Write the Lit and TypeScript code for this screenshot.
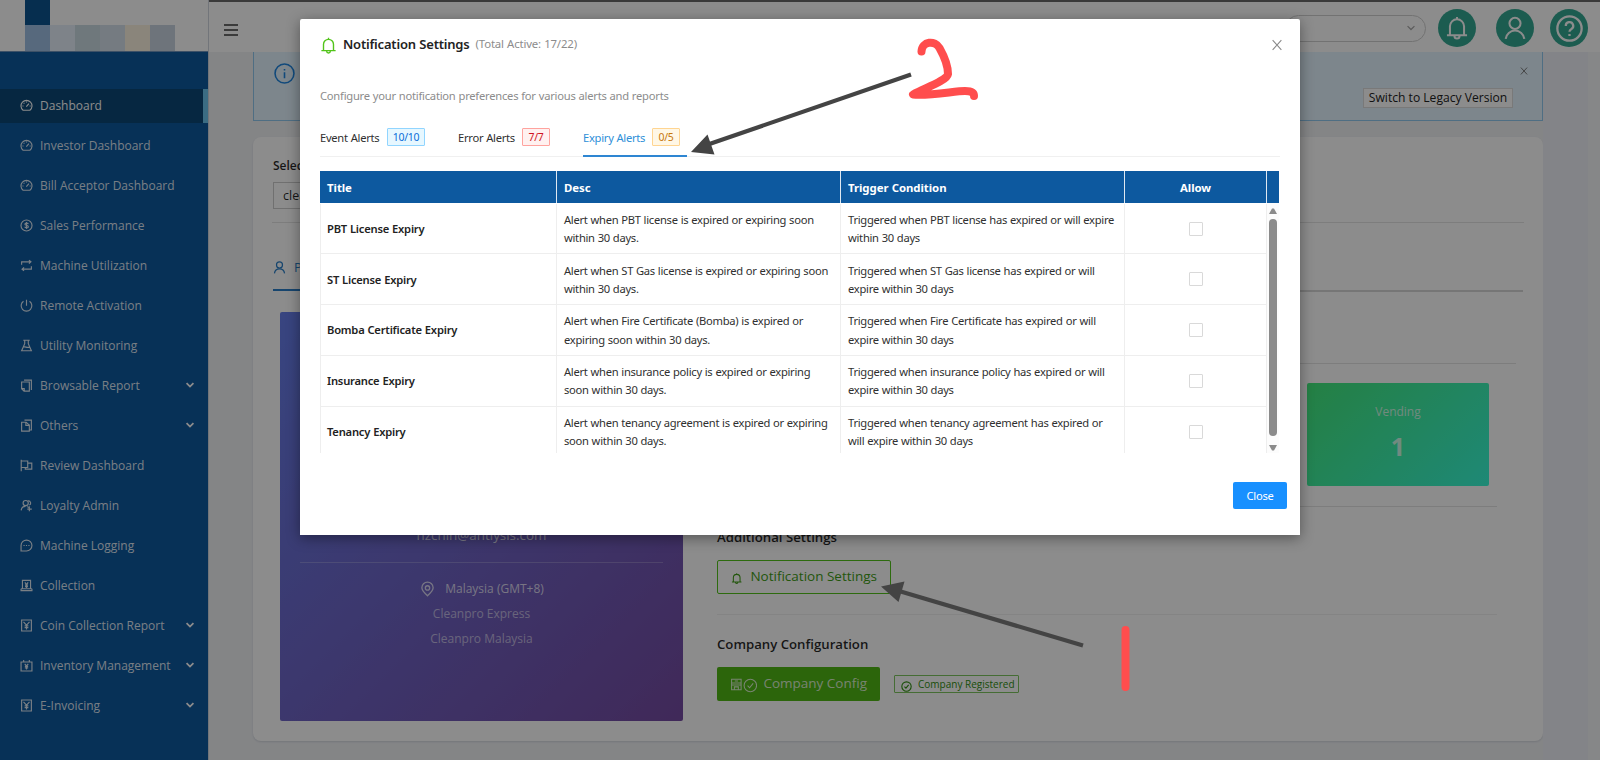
import { LitElement, html, css, svg } from "lit";
import { customElement } from "lit/decorators.js";
import { classMap } from "lit/directives/class-map.js";

const bell = svg`<path d="M8 .6v1.6M3.3 12.600V6.900a4.700 4.700 0 0 1 9.400 0v5.700M1.300 12.800h13.400M6.300 13.300a1.700 1.700 0 0 0 3.400 0"/>`;
const user = svg`<circle cx="8" cy="4.9" r="3.700"/><path d="M1.800 15.200a6.250 6.250 0 0 1 12.400 0"/>`;
const check = svg`<circle cx="8" cy="8" r="6.8"/><path d="m5 8.2 2.2 2.3 3.9-4.8"/>`;
const close = svg`<path d="m3 2.5 10 11M13 2.5l-10 11"/>`;
const icons: Record<string, unknown> = {
  dash: svg`<path d="M3.8 13.8a6.8 6.8 0 1 1 8.4 0z"/><path d="M7.8 9.4 11 5.8M8 3v1.3M3 8.6h1.3M11.8 8.6h1.3M4.6 4.8l.8.8"/>`,
  sales: svg`<circle cx="8" cy="8" r="6.8"/><path d="M10.2 6.2C9.8 4.6 6 4.6 6 6.4c0 2 4.300.9 4.3 3 0 2-3.900 1.900-4.500.2M8 3.800v8.400"/>`,
  swap: svg`<path d="M2 7V3.500H13M11 1.300l2.500 2.200L11 5.700M14 9v3.500H3M5 10.300l-2.500 2.200L5 14.700"/>`,
  power: svg`<path d="M8 .8v7.500M4.300 2.800a6.600 6.600 0 1 0 7.400 0"/>`,
  flask: svg`<path d="M4 1.500h8M5.800 1.500v4.300L2 14.500h12L10.200 5.800V1.500M4.500 10c2-1.500 4 1.500 7 0"/>`,
  copy: svg`<path d="M5 1.300h9v12.200M2 3.700h9.500V15H5l-3-3z"/><path d="M2.200 11.800h3v3"/>`,
  copy2: svg`<path d="M5.500 1.300H14v12.200h-2.500M2 4h5.500l4 3.500V15H2z"/><path d="M7.200 4v3.800h4"/>`,
  flag: svg`<path d="M1.500 1v14M1.500 2.500h8v8h-8M9.500 5h5v7.500h-8v-2"/>`,
  loyal: svg`<circle cx="7" cy="5" r="3.200"/><path d="M1.500 14c.2-3 2.500-5 5.300-5M10 2c3.500.3 4 4.500 1.500 5.500M8.500 9.500c2.500 0 3 2 3 2M11.500 9v6M9 12.500h5.500"/>`,
  chat: svg`<path d="M1.300 14.700V8A6.700 6.700 0 1 1 8 14.700z"/><path d="M4.300 8h1.400M7.300 8h1.400M10.300 8h1.400"/>`,
  coll: svg`<path d="M3 12V1.700h10V12M1.300 12v2.300h13.400V12M1.300 12h13.400"/><path d="m6 4.200 2 2.700 2-2.700M8 7v4M6.200 7.500h3.600M6.200 9.300h3.600"/>`,
  book: svg`<path d="M2 1.200h12v13.600H2z"/><path d="m4.300 3.500 3.700 4 3.700-4M8 7.500V13M5.700 8.500h4.600M5.700 10.600h4.600"/>`,
  inv: svg`<path d="M1.300 3.700h13.400v11H1.300zM4.500 1.200v2.500M11.500 1.200v2.500"/><path d="m5.800 6 2.200 2.600L10.200 6M8 8.500v4.500M6 9h4M6 11h4"/>`,
  chev: svg`<path d="m2.500 5 5.500 5.500L13.500 5"/>`,
};
const ico = (g: unknown, cls: string) => html`<svg class=${cls} viewBox="0 0 16 16">${g}</svg>`;

const NAV: [string, string, boolean][] = [
  ["dash", "Dashboard", false], ["dash", "Investor Dashboard", false], ["dash", "Bill Acceptor Dashboard", false],
  ["sales", "Sales Performance", false], ["swap", "Machine Utilization", false], ["power", "Remote Activation", false],
  ["flask", "Utility Monitoring", false], ["copy", "Browsable Report", true], ["copy2", "Others", true],
  ["flag", "Review Dashboard", false], ["loyal", "Loyalty Admin", false], ["chat", "Machine Logging", false],
  ["coll", "Collection", false], ["book", "Coin Collection Report", true], ["inv", "Inventory Management", true],
  ["book", "E-Invoicing", true],
];

@customElement("side-nav")
class SideNav extends LitElement {
  static styles = css`
    :host { display: flex; flex-direction: column; width: 208px; flex: none; background: #0d599f; color: rgba(255,255,255,.87); font: 12px "Open Sans", sans-serif; }
    .logo { height: 51px; background: #fff; display: grid; grid-template: 25px 26px / repeat(6, 25px); padding-left: 25px; border-bottom: 1px solid #6f94bc; flex: none; }
    .c0 { background: #0c5591; grid-column: 1; }
    .c1 { background: #9fc0e4; grid-column: 1; grid-row: 2; }
    .c2 { background: #e6effa; grid-row: 2; } .c3 { background: #cbdae2; grid-row: 2; }
    .c4 { background: #d5e0ec; grid-row: 2; } .c5 { background: #fbf3e0; grid-row: 2; } .c6 { background: #c8d4e1; grid-row: 2; }
    nav { padding-top: 37px; display: flex; flex-direction: column; gap: 6px; }
    .item { height: 34px; display: flex; align-items: center; padding: 0 13px 2px 20px; box-sizing: border-box; }
    .item.on { background: #0b4777; border-right: 5px solid #6cc5ee; color: #fff; padding-right: 8px; }
    .i { width: 13px; height: 13px; margin: 1px 7px 0 0; fill: none; stroke: currentColor; stroke-width: 1.4; }
    .t { flex: 1; white-space: nowrap; }
    .v { width: 10px; height: 10px; fill: none; stroke: #fff; stroke-width: 2.8; }
  `;
  render() {
    return html`<div class="logo">${[0, 1, 2, 3, 4, 5, 6].map((n) => html`<div class="c${n}"></div>`)}</div>
      <nav>${NAV.map(([g, t, sub], k) => html`<div class=${classMap({ item: true, on: k === 0 })}>
        ${ico(icons[g], "i")}<span class="t">${t}</span>${sub ? ico(icons.chev, "v") : ""}</div>`)}</nav>`;
  }
}

const ROWS: [string, string, string, string, string][] = [
  ["PBT License Expiry", "Alert when PBT license is expired or expiring soon", "within 30 days.", "Triggered when PBT license has expired or will expire", "within 30 days"],
  ["ST License Expiry", "Alert when ST Gas license is expired or expiring soon", "within 30 days.", "Triggered when ST Gas license has expired or will", "expire within 30 days"],
  ["Bomba Certificate Expiry", "Alert when Fire Certificate (Bomba) is expired or", "expiring soon within 30 days.", "Triggered when Fire Certificate has expired or will", "expire within 30 days"],
  ["Insurance Expiry", "Alert when insurance policy is expired or expiring", "soon within 30 days.", "Triggered when insurance policy has expired or will", "expire within 30 days"],
  ["Tenancy Expiry", "Alert when tenancy agreement is expired or expiring", "soon within 30 days.", "Triggered when tenancy agreement has expired or", "will expire within 30 days"],
];

@customElement("settings-modal")
class SettingsModal extends LitElement {
  static styles = css`
    :host { display: flex; flex-direction: column; box-sizing: border-box; width: 1000px; height: 516px; background: #fff; box-shadow: 0 3px 14px rgba(0,0,0,.4); font: 11.2px "Noto Sans", sans-serif; letter-spacing: -.28px; word-spacing: .3px; color: #303030; padding: 0 13px 0 20px; white-space: nowrap; border-radius: 2px 2px 0 0; }
    .head { height: 49px; display: flex; align-items: center; padding-right: 3px; }
    .bell { width: 17px; height: 17px; fill: none; stroke: #52c41a; stroke-width: 1.3; margin: 3px 6px 0 0; }
    .ttl { font-size: 13px; font-weight: 600; color: #222; margin-right: 6px; letter-spacing: -.2px; }
    .act { color: #8c8c8c; font-size: 11.4px; letter-spacing: -.15px; flex: 1; }
    .x { width: 14px; height: 14px; fill: none; stroke: #888; stroke-width: 1.2; margin-top: 3px; }
    .desc { color: #8c8c8c; height: 55px; line-height: 56px; letter-spacing: -.24px; }
    .tabs { display: flex; gap: 33px; height: 33px; border-bottom: 1px solid #f0f0f0; width: 960px; }
    .tab { display: flex; align-items: center; height: 28px; padding-bottom: 4px; justify-content: space-between; width: 105px; box-sizing: content-box; }
    .tab:nth-child(2) { width: 92px; }
    .tab.on { width: 97px; color: #2e8fd8; border-bottom: 2px solid #2e86d2; padding-right: 7px; }
    .tag { height: 16px; line-height: 16px; width: 36px; text-align: center; font-size: 10.5px; border: 1px solid #91d5ff; background: #e6f7ff; color: #096dd9; border-radius: 1px; }
    .err { width: 26px; border-color: #ffa39e; background: #fff1f0; color: #cf1322; }
    .warn { width: 26px; border-color: #ffd591; background: #fff7e6; color: #c8780c; }
    .table { margin: 14px 0 0; width: 959px; }
    .hr, .tr { display: grid; grid-template-columns: 237px 284px 284px 142px 12px; }
    .hr { height: 32px; background: #0d599f; color: #fff; font-weight: 700; font-size: 11.4px; letter-spacing: -.05px; }
    .hr > div { display: flex; align-items: center; padding-left: 7px; box-sizing: border-box; border-right: 1px solid #dfe8f1; }
    .hr > div:last-child { border: 0; }
    .hr .ctr, .tr .ctr { justify-content: center; padding: 0; }
    .body { height: 250px; overflow: hidden; display: flex; }
    .rows { width: 947px; flex: none; padding-top: .7px; }
    .tr { height: 50.75px; grid-template-columns: 237px 284px 284px 142px; }
    .tr > div { display: flex; flex-direction: column; justify-content: center; box-sizing: border-box; border-right: 1px solid #eee; border-bottom: 1px solid #eee; padding: 1px 0 0 7px; line-height: 18.3px; }
    .tr > div:first-child { border-left: 1px solid #eee; padding-left: 6px; font-weight: 600; color: #222; letter-spacing: -.22px; }
    .tr .ctr { align-items: center; }
    .box { width: 12px; height: 12px; border: 1px solid #d9d9d9; border-radius: 1px; }
    .bar { width: 12px; background: #fcfcfc; display: flex; flex-direction: column; align-items: center; padding: 5px 0 2px; box-sizing: border-box; }
    .thumb { width: 8px; flex: 1; background: #8b8b8b; border-radius: 4px; margin: 5px 0 9px; }
    .up, .dn { width: 8px; height: 6px; fill: #8b8b8b; }
    .foot { display: flex; justify-content: flex-end; padding-top: 29px; }
    .btn { width: 54px; height: 27px; line-height: 27px; text-align: center; background: #1890ff; color: #fff; border-radius: 2px; }
  `;
  render() {
    return html`
      <div class="head">${ico(bell, "bell")}<span class="ttl">Notification Settings</span><span class="act">(Total Active: 17/22)</span>${ico(close, "x")}</div>
      <div class="desc">Configure your notification preferences for various alerts and reports</div>
      <div class="tabs">
        <div class="tab">Event Alerts<span class="tag">10/10</span></div>
        <div class="tab">Error Alerts<span class="tag err">7/7</span></div>
        <div class="tab on">Expiry Alerts<span class="tag warn">0/5</span></div>
      </div>
      <div class="table">
        <div class="hr"><div>Title</div><div>Desc</div><div>Trigger Condition</div><div class="ctr">Allow</div><div></div></div>
        <div class="body">
          <div class="rows">${ROWS.map(([t, a, b, c, d]) => html`<div class="tr"><div>${t}</div><div><span>${a}</span><span>${b}</span></div><div><span>${c}</span><span>${d}</span></div><div class="ctr"><div class="box"></div></div></div>`)}</div>
          <div class="bar"><svg class="up" viewBox="0 0 8 6"><path d="M0 6 3 .5h2L8 6z"/></svg><div class="thumb"></div><svg class="dn" viewBox="0 0 8 6"><path d="M0 0 3 5.500h2L8 0z"/></svg></div>
        </div>
      </div>
      <div class="foot"><div class="btn">Close</div></div>`;
  }
}

@customElement("app-root")
class AppRoot extends LitElement {
  static styles = css`
    :host { display: block; position: relative; width: 1600px; height: 760px; overflow: hidden; font: 12px "Open Sans", sans-serif; color: rgba(0,0,0,.85); white-space: nowrap; }
    .page { display: flex; height: 760px; }
    .main { flex: 1; display: flex; flex-direction: column; background: #f0f2f5; border-left: 1px solid #cfd6de; box-sizing: border-box; min-width: 0; }
    .top { height: 52px; box-sizing: border-box; background: #fff; border-top: 2px solid #6b6b6b; display: flex; align-items: center; padding: 2px 12px 0 15px; flex: none; }
    .burger { width: 14px; height: 12px; stroke: #3d3d3d; stroke-width: 1.5; margin-top: 4px; }
    .search { margin-left: auto; width: 130px; height: 25px; border: 1px solid #d0d0d0; border-radius: 14px; display: flex; align-items: center; justify-content: flex-end; padding-right: 9px; box-sizing: content-box; }
    .sv { width: 10px; height: 10px; fill: none; stroke: #a8a8a8; stroke-width: 2; }
    .round { width: 38px; height: 38px; border-radius: 50%; background: #34a892; display: flex; align-items: center; justify-content: center; margin-left: 12px; }
    .round + .round { margin-left: 20px; } .round + .round + .round { margin-left: 16px; }
    .ri { width: 24px; height: 24px; fill: none; stroke: #fff; stroke-width: 1.35; }
    .q { width: 27px; height: 27px; }
    .cols { flex: 1; display: flex; min-height: 0; }
    .content { width: 1290px; padding-left: 44px; flex: none; }
    .gutter { width: 45px; background: #eef1f7; } .edge { flex: 1; background: #fff; opacity: .35; }
    .alert { box-sizing: border-box; height: 69px; border: 1px solid #91c9ee; border-top: 0; background: #e3f4ff; display: flex; padding: 11px 13px 0 20px; }
    .info { width: 21px; height: 21px; fill: none; stroke: #1f86e0; stroke-width: 1.2; }
    .sw { margin: 25px 0 0 auto; box-sizing: border-box; width: 150px; height: 20px; background: #fff; border: 1px solid #ddd; text-align: center; line-height: 17px; color: #222; font-size: 12.1px; }
    .ax { width: 10px; height: 10px; fill: none; stroke: #777; stroke-width: 1.5; margin: 3px 0 0 6px; }
    .card { margin-top: 16px; background: #fff; border-radius: 8px; height: 604px; box-shadow: 0 1px 2px rgba(0,20,60,.12); padding: 22px 20px 0; box-sizing: border-box; }
    .lbl { height: 16px; line-height: 14px; font-weight: 600; }
    .sel { width: 300px; height: 25px; border: 1px solid #ccc; margin-top: 7px; line-height: 25px; padding-left: 9px; font-size: 12.5px; }
    .ln { height: 1px; background: #e4e4e4; }
    .a { margin: 13px -1px 0; }
    .ptab { display: flex; align-items: center; height: 67px; box-sizing: border-box; padding-top: 21px; color: #2a7fc8; width: 120px; border-bottom: 2px solid #2a7fc8; margin-top: 1px; font-size: 13px; }
    .ui { width: 13px; height: 13px; fill: none; stroke: currentColor; stroke-width: 1.5; margin-right: 8px; }
    .b { height: 2px; background: #d8d8d8; margin-top: -1px; margin-left: 120px; }
    .two { display: flex; padding: 20px 7px 0; gap: 34px; }
    .profile { width: 403px; height: 409px; border-radius: 2px; background: linear-gradient(135deg, #667eea 0%, #764ba2 100%); color: rgba(255,255,255,.75); text-align: center; padding-top: 213px; box-sizing: border-box; flex: none; }
    .mail { font-size: 13.4px; line-height: 20px; color: rgba(255,255,255,.78); }
    .pl { height: 1px; background: rgba(255,255,255,.22); margin: 17px 20px 13px; }
    .pr { height: 25px; display: flex; align-items: center; justify-content: center; opacity: .75; }
    .loc { opacity: 1; padding-left: 1px; }
    .pin { width: 15px; height: 16px; fill: none; stroke: currentColor; stroke-width: 1.4; margin-right: 10px; }
    .right { width: 799px; padding-top: 51px; }
    .vend { margin: 19px 0 0 590px; width: 182px; height: 103px; border-radius: 2px; background: linear-gradient(135deg, #43e97b 0%, #38f9d7 100%); color: rgba(255,255,255,.75); text-align: center; padding-top: 20px; box-sizing: border-box; }
    .num { font-size: 25px; font-weight: 700; line-height: 38px; margin-top: 7px; }
    .c { margin-top: 20px; width: 780px; } .d { width: 780px; background: #f0f0f0; margin-top: 20px; }
    h4 { margin: 0; font-size: 13.2px; line-height: 18px; font-weight: 600; }
    .h1 { margin-top: 21px; } .h2 { margin-top: 20px; }
    .btn { display: flex; align-items: center; box-sizing: border-box; height: 34px; font-size: 13.5px; border-radius: 2px; padding: 0 13px 2px; }
    .out { margin-top: 14px; width: 174px; border: 1px solid #52c41a; color: #3f9d16; }
    .gb { width: 12px; height: 13px; fill: none; stroke: currentColor; stroke-width: 1.5; margin: 4px 8px 0 0; }
    .row { display: flex; align-items: center; gap: 14px; margin-top: 14px; }
    .cfg { width: 163px; background: #50b814; color: rgba(255,255,255,.8); }
    .shop { width: 13px; height: 13px; fill: none; stroke: currentColor; stroke-width: 1.3; margin-top: 3px; }
    .ok { width: 15px; height: 15px; fill: none; stroke: currentColor; stroke-width: 1.2; margin: 5px 6px 0 0; }
    .reg { height: 16px; width: 117px; border: 1px solid #7fc760; color: #2f8f10; font-size: 10px; display: flex; align-items: center; padding-left: 6px; border-radius: 1px; }
    .rk { width: 11px; height: 11px; fill: none; stroke: currentColor; stroke-width: 1.6; margin: 4px 6px 0 0; }
    .mask { position: absolute; inset: 0; background: rgba(0,0,0,.45); }
    settings-modal { position: absolute; left: 300px; top: 19px; }
    .ink { position: absolute; left: 0; top: 0; width: 1600px; height: 760px; }
  `;
  render() {
    return html`
      <div class="page"><side-nav></side-nav>
        <div class="main">
          <div class="top">
            <svg class="burger" viewBox="0 0 14 12"><path d="M0 1h14M0 6h14M0 11h14"/></svg>
            <div class="search">${ico(icons.chev, "sv")}</div>
            <div class="round">${ico(bell, "ri")}</div>
            <div class="round">${ico(user, "ri")}</div>
            <div class="round">${ico(svg`<circle cx="8" cy="8" r="7.200"/><path d="M5.800 6.500a2.200 2.200 0 1 1 3.200 1.900c-.8.4-1 .7-1 1.500M8 11.200v1.200"/>`, "ri q")}</div>
          </div>
          <div class="cols">
            <div class="content">
              <div class="alert">${ico(svg`<circle cx="8" cy="8" r="7.200"/><path d="M8 7v4.600M8 4.500v1.200"/>`, "info")}<div class="sw">Switch to Legacy Version</div>${ico(close, "ax")}</div>
              <div class="card">
                <div class="lbl">Select Outlet</div>
                <div class="sel">cleanpro</div>
                <div class="ln a"></div>
                <div class="ptab">${ico(user, "ui")}Profile</div>
                <div class="ln b"></div>
                <div class="two">
                  <div class="profile">
                    <div class="mail">hzchin@antlysis.com</div>
                    <div class="pl"></div>
                    <div class="pr loc">${ico(svg`<path d="M8 15.200C4.500 12 2 9.700 2 6.700a6 6 0 0 1 12 0c0 3-2.500 5.300-6 8.500z"/><circle cx="8" cy="6.800" r="2.300"/>`, "pin")}Malaysia (GMT+8)</div>
                    <div class="pr">Cleanpro Express</div>
                    <div class="pr">Cleanpro Malaysia</div>
                  </div>
                  <div class="right">
                    <div class="ln"></div>
                    <div class="vend">Vending<div class="num">1</div></div>
                    <div class="ln c"></div>
                    <h4 class="h1">Additional Settings</h4>
                    <div class="btn out">${ico(bell, "gb")}Notification Settings</div>
                    <div class="ln d"></div>
                    <h4 class="h2">Company Configuration</h4>
                    <div class="row">
                      <div class="btn cfg">${ico(svg`<path d="M2 1.500h12v4.500H2zM2 6v8.500h12V6M2 8.500h12M5.500 14v-3h5v3M6 3.700h4"/>`, "shop")}${ico(check, "ok")}Company Config</div>
                      <div class="reg">${ico(check, "rk")}Company Registered</div>
                    </div>
                  </div>
                </div>
              </div>
            </div>
            <div class="gutter"></div><div class="edge"></div>
          </div>
        </div>
      </div>
      <div class="mask"></div>
      <settings-modal></settings-modal>
      <svg class="ink" viewBox="0 0 1600 760">
        <g fill="#444" stroke="#444" stroke-width="4.200"><path d="M911 74.500 708 144.500M1083 645.500 899 591"/>
        <g stroke="none"><path d="M691 152 707.500 134.500 714.500 154.500zM881 586.500 904.500 581.500 898.500 602z"/></g></g>
        <g fill="none" stroke="#ff4d4d" stroke-width="8" stroke-linecap="round" stroke-linejoin="round"><path d="M921.500 51.500C922 41 935 40 939.500 48 944 56 948 65 948 74 947 80 930 86 913 94.500 930 96 955 91 965 91 972 91 974 93 974 96M1125.500 630v57"/></g>
      </svg>`;
  }
}
